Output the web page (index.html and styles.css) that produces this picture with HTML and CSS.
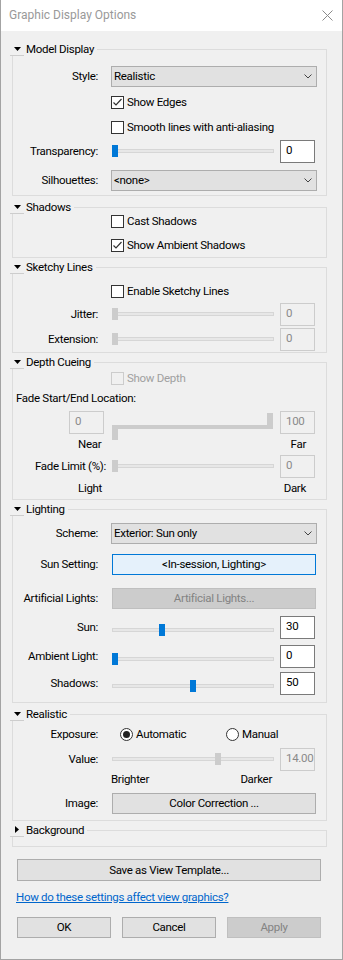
FILE: index.html
```html
<!DOCTYPE html>
<html lang="en">
<head>
    <meta charset="UTF-8">
    <meta name="viewport" content="width=device-width, initial-scale=1.0">
    <title>Graphic Display Options</title>
    <link rel="stylesheet" href="styles.css">
</head>
<body>
<div class="window">
    <div class="titlebar">
        <span class="title">Graphic Display Options</span>
        <svg class="close" width="11" height="11" viewBox="0 0 11 11"><path d="M0.5 0.5L10.5 10.5M10.5 0.5L0.5 10.5" stroke="#8a8a8a" stroke-width="1" fill="none"/></svg>
    </div>

    <div class="content">
        <!-- Model Display -->
        <fieldset class="group model">
            <legend><span class="toggle"><svg width="7" height="4" viewBox="0 0 7 4"><polygon points="0,0 7,0 3.5,4" fill="#000"/></svg></span>Model Display</legend>
            <div class="row mt9">
                <span class="label">Style:</span>
                <div class="select">Realistic<svg width="8" height="5" viewBox="0 0 8 5"><path d="M0.5 0.5L4 4L7.5 0.5" stroke="#444" fill="none"/></svg></div>
            </div>
            <div class="row line mt7">
                <span></span>
                <span class="check"><span class="box"><svg width="11" height="11" viewBox="0 0 11 11"><path d="M1.5 5.5L4 8L9.5 2" stroke="#333" stroke-width="1.2" fill="none"/></svg></span>Show Edges</span>
            </div>
            <div class="row line mt10">
                <span></span>
                <span class="check"><span class="box"></span>Smooth lines with anti-aliasing</span>
            </div>
            <div class="row mt5">
                <span class="label">Transparency:</span>
                <div class="ctrl">
                    <div class="slider"><span class="track"></span><span class="thumb" style="--pos:0"></span></div>
                    <span class="num">0</span>
                </div>
            </div>
            <div class="row mt6">
                <span class="label">Silhouettes:</span>
                <div class="select">&lt;none&gt;<svg width="8" height="5" viewBox="0 0 8 5"><path d="M0.5 0.5L4 4L7.5 0.5" stroke="#444" fill="none"/></svg></div>
            </div>
        </fieldset>

        <!-- Shadows -->
        <fieldset class="group shadows">
            <legend><span class="toggle"><svg width="7" height="4" viewBox="0 0 7 4"><polygon points="0,0 7,0 3.5,4" fill="#000"/></svg></span>Shadows</legend>
            <div class="row line">
                <span></span>
                <span class="check"><span class="box"></span>Cast Shadows</span>
            </div>
            <div class="row line mt9">
                <span></span>
                <span class="check"><span class="box"><svg width="11" height="11" viewBox="0 0 11 11"><path d="M1.5 5.5L4 8L9.5 2" stroke="#333" stroke-width="1.2" fill="none"/></svg></span>Show Ambient Shadows</span>
            </div>
        </fieldset>

        <!-- Sketchy Lines -->
        <fieldset class="group sketchy">
            <legend><span class="toggle"><svg width="7" height="4" viewBox="0 0 7 4"><polygon points="0,0 7,0 3.5,4" fill="#000"/></svg></span>Sketchy Lines</legend>
            <div class="row line mt10">
                <span></span>
                <span class="check"><span class="box"></span>Enable Sketchy Lines</span>
            </div>
            <div class="row mt4">
                <span class="label">Jitter:</span>
                <div class="ctrl">
                    <div class="slider"><span class="track"></span><span class="thumb off" style="--pos:0"></span></div>
                    <span class="num off">0</span>
                </div>
            </div>
            <div class="row mt2">
                <span class="label">Extension:</span>
                <div class="ctrl">
                    <div class="slider"><span class="track"></span><span class="thumb off" style="--pos:0"></span></div>
                    <span class="num off">0</span>
                </div>
            </div>
        </fieldset>

        <!-- Depth Cueing -->
        <fieldset class="group depth">
            <legend><span class="toggle"><svg width="7" height="4" viewBox="0 0 7 4"><polygon points="0,0 7,0 3.5,4" fill="#000"/></svg></span>Depth Cueing</legend>
            <div class="row line mt2">
                <span></span>
                <span class="check off"><span class="box"></span>Show Depth</span>
            </div>
            <div class="row line text mt5">Fade Start/End Location:</div>
            <div class="row range mt5">
                <span class="num off">0</span>
                <div class="dual">
                    <span class="bar"></span>
                    <span class="knob lo"></span>
                    <span class="knob hi"></span>
                </div>
                <span class="num off">100</span>
            </div>
            <div class="row line ends mt3">
                <span>Near</span>
                <span>Far</span>
            </div>
            <div class="row mt3">
                <span class="label wide">Fade Limit (%):</span>
                <div class="ctrl">
                    <div class="slider"><span class="track"></span><span class="thumb off" style="--pos:0"></span></div>
                    <span class="num off">0</span>
                </div>
            </div>
            <div class="row line ends mt3">
                <span>Light</span>
                <span>Dark</span>
            </div>
        </fieldset>

        <!-- Lighting -->
        <fieldset class="group lighting">
            <legend><span class="toggle"><svg width="7" height="4" viewBox="0 0 7 4"><polygon points="0,0 7,0 3.5,4" fill="#000"/></svg></span>Lighting</legend>
            <div class="row mt6">
                <span class="label">Scheme:</span>
                <div class="select">Exterior: Sun only<svg width="8" height="5" viewBox="0 0 8 5"><path d="M0.5 0.5L4 4L7.5 0.5" stroke="#444" fill="none"/></svg></div>
            </div>
            <div class="row mt8">
                <span class="label">Sun Setting:</span>
                <div class="ctrl"><span class="btn focus">&lt;In-session, Lighting&gt;</span></div>
            </div>
            <div class="row mt11">
                <span class="label">Artificial Lights:</span>
                <div class="ctrl"><span class="btn off">Artificial Lights...</span></div>
            </div>
            <div class="row mt3">
                <span class="label">Sun:</span>
                <div class="ctrl">
                    <div class="slider"><span class="track"></span><span class="thumb" style="--pos:0.3"></span></div>
                    <span class="num">30</span>
                </div>
            </div>
            <div class="row mt6">
                <span class="label">Ambient Light:</span>
                <div class="ctrl">
                    <div class="slider"><span class="track"></span><span class="thumb" style="--pos:0"></span></div>
                    <span class="num">0</span>
                </div>
            </div>
            <div class="row mt4">
                <span class="label">Shadows:</span>
                <div class="ctrl">
                    <div class="slider"><span class="track"></span><span class="thumb" style="--pos:0.5"></span></div>
                    <span class="num">50</span>
                </div>
            </div>
        </fieldset>

        <!-- Realistic -->
        <fieldset class="group realistic">
            <legend><span class="toggle"><svg width="7" height="4" viewBox="0 0 7 4"><polygon points="0,0 7,0 3.5,4" fill="#000"/></svg></span>Realistic</legend>
            <div class="row line mt6">
                <span class="label">Exposure:</span>
                <div class="radios">
                    <span class="radio"><span class="dot on"></span>Automatic</span>
                    <span class="radio"><span class="dot"></span>Manual</span>
                </div>
            </div>
            <div class="row mt6">
                <span class="label">Value:</span>
                <div class="ctrl">
                    <div class="slider"><span class="track"></span><span class="thumb off" style="--pos:0.66"></span></div>
                    <span class="num off right">14.00</span>
                </div>
            </div>
            <div class="row line mt1">
                <span></span>
                <div class="scale"><span>Brighter</span><span>Darker</span></div>
            </div>
            <div class="row mt5">
                <span class="label">Image:</span>
                <div class="ctrl"><span class="btn">Color Correction ...</span></div>
            </div>
        </fieldset>

        <!-- Background -->
        <fieldset class="group background">
            <legend><span class="toggle"><svg width="4" height="7" viewBox="0 0 4 7"><polygon points="0,0 4,3.5 0,7" fill="#000"/></svg></span>Background</legend>
        </fieldset>

        <div class="footer">
            <span class="btn save">Save as View Template...</span>
            <a class="help" href="#">How do these settings affect view graphics?</a>
            <div class="actions">
                <span class="btn">OK</span>
                <span class="btn">Cancel</span>
                <span class="btn off">Apply</span>
            </div>
        </div>
    </div>
</div>
</body>
</html>
```

FILE: styles.css
```css
* {
    box-sizing: border-box;
}
body {
    margin: 0;
    font-family: Roboto, "Liberation Sans", sans-serif;
    font-size: 11.5px;
    letter-spacing: -0.3px;
    line-height: 15px;
    color: #000;
    background-color: #f0f0f0;
}
.window {
    width: 343px;
    height: 960px;
    background-color: #f0f0f0;
    border: 1px solid #a3a3a3;
    border-top: none;
}
.titlebar {
    height: 31px;
    background-color: #fff;
    display: flex;
    align-items: center;
    justify-content: space-between;
    padding: 0 9px 0 8px;
}
.title {
    font-size: 12px;
    letter-spacing: 0;
    color: #999;
}
.content {
    padding: 11px 15px 0 11px;
}

/* group boxes */
.group {
    margin: 0;
    padding: 0 9px 0 0;
    border: 1px solid #dcdcdc;
    min-width: 0;
}
.group legend {
    display: flex;
    align-items: center;
    height: 14px;
    padding: 0 3px 0 0;
    margin-left: -3px;
}
.toggle {
    width: 14px;
    height: 14px;
    display: flex;
    align-items: center;
    justify-content: center;
    background-color: #f0f0f0;
    border-bottom: 1px solid #cdcdcd;
    margin-right: 2px;
}
.model {
    padding-bottom: 3px;
}
.shadows {
    margin-top: 4px;
    padding-bottom: 4px;
}
.sketchy {
    margin-top: 2px;
    padding-bottom: 1px;
}
.depth {
    margin-top: 2px;
    padding-bottom: 3px;
}
.lighting {
    margin-top: 2px;
    padding-bottom: 10px;
}
.realistic {
    margin-top: 4px;
    padding-bottom: 5px;
}
.background {
    margin-top: 2px;
    padding-bottom: 9px;
}

/* rows */
.row {
    display: grid;
    grid-template-columns: 85px 206px;
    column-gap: 13px;
    align-items: center;
    height: 23px;
}
.row.line {
    height: 15px;
}
.row.text {
    display: block;
    padding-left: 3px;
}
.row.range {
    display: flex;
    column-gap: 0;
    padding-left: 56px;
}
.row.ends {
    display: flex;
    column-gap: 0;
    justify-content: space-between;
    padding: 0 11px 0 65px;
}
.mt1 { margin-top: 1px; }
.mt2 { margin-top: 2px; }
.mt3 { margin-top: 3px; }
.mt4 { margin-top: 4px; }
.mt5 { margin-top: 5px; }
.mt6 { margin-top: 6px; }
.mt7 { margin-top: 7px; }
.mt8 { margin-top: 8px; }
.mt9 { margin-top: 9px; }
.mt10 { margin-top: 10px; }
.mt11 { margin-top: 11px; }

.label {
    text-align: right;
    white-space: nowrap;
}
.label.wide {
    margin-right: -8px;
}

/* controls */
.select {
    height: 21px;
    display: flex;
    align-items: center;
    justify-content: space-between;
    padding: 0 4px 0 2px;
    background-color: #e1e1e1;
    border: 1px solid #adadad;
}
.check {
    display: flex;
    align-items: center;
    gap: 3px;
    white-space: nowrap;
}
.box {
    width: 13px;
    height: 13px;
    flex: none;
    display: flex;
    align-items: center;
    justify-content: center;
    background-color: #fff;
    border: 1px solid #333;
}
.check.off {
    color: #a0a0a0;
}
.check.off .box {
    border-color: #cccccc;
    background-color: #f0f0f0;
}
.radios {
    display: flex;
    align-items: center;
    padding-left: 9px;
}
.radio {
    flex: none;
    display: flex;
    align-items: center;
    gap: 3px;
    width: 106px;
}
.dot {
    width: 13px;
    height: 13px;
    border: 1px solid #333;
    border-radius: 50%;
    background-color: #fff;
    display: flex;
    align-items: center;
    justify-content: center;
}
.dot.on::after {
    content: "";
    width: 7px;
    height: 7px;
    border-radius: 50%;
    background-color: #222;
}
.ctrl {
    display: flex;
    align-items: center;
}
.slider {
    position: relative;
    width: 162px;
    height: 23px;
    margin-left: 1px;
    display: flex;
    align-items: center;
}
.lighting .slider {
    margin-top: 6px;
}
.track {
    flex: 1;
    height: 4px;
    margin-top: -1px;
    background-color: #e7e7e7;
    border: 1px solid #d6d6d6;
}
.thumb {
    position: absolute;
    top: 5px;
    left: calc(var(--pos) * 156px);
    width: 6px;
    height: 12px;
    background-color: #0078d7;
}
.thumb.off {
    background-color: #ccc;
}
.num {
    width: 35px;
    height: 23px;
    margin-left: 6px;
    padding: 2px 0 0 5px;
    background-color: #fff;
    border: 1px solid #7a7a7a;
}
.num.off {
    color: #8a8a8a;
    background-color: #f0f0f0;
    border-color: #ccc;
}
.num.right {
    text-align: right;
    padding-right: 2px;
}
.range .num {
    flex: none;
    margin-left: 0;
}
.dual {
    flex: none;
    position: relative;
    width: 162px;
    height: 23px;
    margin: 0 6px 0 8px;
}
.bar {
    position: absolute;
    left: 0;
    right: 1px;
    top: 14px;
    height: 4px;
    background-color: #ccc;
}
.knob {
    position: absolute;
    width: 6px;
    height: 13px;
    background-color: #ccc;
}
.knob.lo {
    left: 0;
    top: 16px;
}
.knob.hi {
    right: 1px;
    top: 2px;
}
.scale {
    display: flex;
    justify-content: space-between;
    width: 161px;
}
.btn {
    height: 21px;
    display: flex;
    align-items: center;
    justify-content: center;
    background-color: #e1e1e1;
    border: 1px solid #adadad;
    white-space: nowrap;
}
.ctrl .btn {
    flex: 1;
    margin: 0 1px;
}
.btn.focus {
    background-color: #e5f1fb;
    border-color: #0078d7;
}
.btn.off {
    color: #838383;
    background-color: #ccc;
    border-color: #bfbfbf;
}

/* footer */
.footer {
    padding-left: 5px;
}
.save {
    width: 304px;
    height: 22px;
    margin-top: 12px;
}
.help {
    display: block;
    margin: 9px 0 0 -1px;
    height: 15px;
    color: #0066cc;
}
.actions {
    display: flex;
    gap: 11px;
    margin-top: 12px;
}
.actions .btn {
    width: 94px;
}
```
